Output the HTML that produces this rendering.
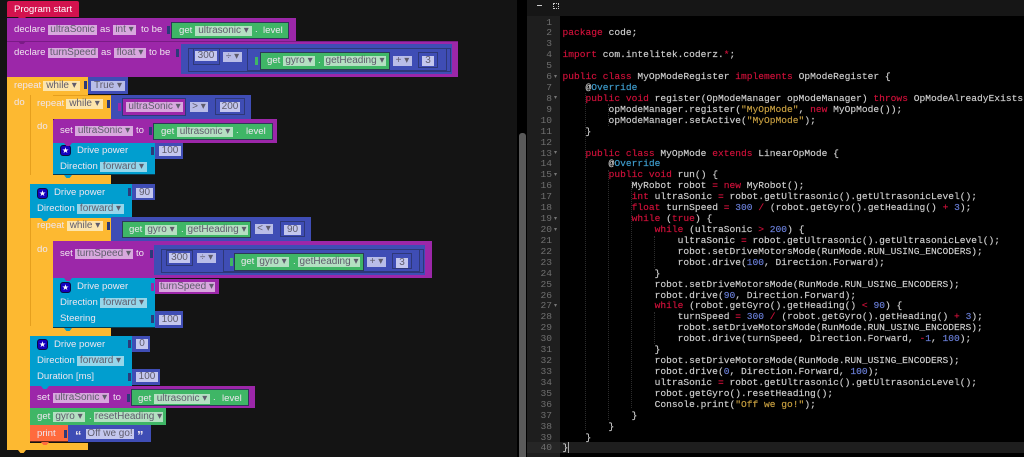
<!DOCTYPE html>
<html><head><meta charset="utf-8"><style>
html,body{margin:0;padding:0;background:#141414;width:1024px;height:457px;overflow:hidden}
#p{position:relative;width:1024px;height:457px;overflow:hidden;font-family:"Liberation Sans",sans-serif}
.b,.t,.f,.x{position:absolute;box-sizing:border-box;white-space:nowrap}
.t{color:#efe6ef;font-size:9.6px;line-height:12px;height:12px}
.f{font-size:10px;line-height:10px;text-align:center;color:#5f5c6c;background:#d8a8de;height:10px}
.g{background:#b4e0c2}.y{background:#fde5ac}.l{background:#b9bde8}.c{background:#96d6ea}.i{background:#c4c7ee}
.pu{background:#9c27a9}.gr{background:#3fb666;border:1px solid #2c3a55}.bl{background:#3f4db5}.ye{background:#fdb931}.cy{background:#019ecf}
.n{width:8px;height:3px;clip-path:polygon(0 0,100% 0,70% 100%,30% 100%)}
.tab{width:3px;height:8px;background:#2c3a7a}
.o{border:1px solid #2e3878;background:transparent}
.s{background:#1400c0;border:1px solid #0a0a40;border-radius:3px;width:11px;height:11px;color:#fff;font-size:8px;line-height:9px;text-align:center}
#code{position:absolute;left:562.5px;top:17.5px;font-family:"Liberation Mono",monospace;font-size:9.6px;line-height:10.92px;color:#cfcfcf;white-space:pre;margin:0;-webkit-text-stroke:.15px}
#nums{position:absolute;left:527px;width:25px;top:17.5px;text-align:right;font-family:"Liberation Mono",monospace;font-size:9.6px;line-height:10.92px;color:#6f6f6f;white-space:pre;margin:0}
#code b{font-weight:normal;color:#d0103a}#code i{font-style:normal;color:#c9a040}#code u{text-decoration:none;color:#6a7fd8}#code em{font-style:normal;color:#3f9fd0}
.ig{position:absolute;width:0;border-left:1px dotted #2c2c2c}
</style></head><body><div id="p">

<!-- yellow repeat -->
<div class="b ye" style="left:7px;top:77px;width:23px;height:373px"></div>
<div class="b ye" style="left:7px;top:77px;width:81px;height:20px"></div>
<div class="b ye" style="left:7px;top:443px;width:81px;height:7px"></div>
<div class="b ye" style="left:18px;top:450px;width:8px;height:3px;clip-path:polygon(0 0,100% 0,70% 100%,30% 100%)"></div>
<div class="b ye" style="left:30px;top:95px;width:81px;height:24px;border-left:1px solid #e59f1e;border-top:1px solid #e59f1e"></div>
<div class="b ye" style="left:30px;top:95px;width:23px;height:88px;border-left:1px solid #e59f1e"></div>
<div class="b ye" style="left:30px;top:175px;width:81px;height:9px"></div>
<div class="b ye" style="left:30px;top:217px;width:81px;height:24px"></div>
<div class="b ye" style="left:30px;top:217px;width:23px;height:119px;border-left:1px solid #e59f1e"></div>
<div class="b ye" style="left:30px;top:326px;width:81px;height:10px"></div>

<!-- program start -->
<div class="b" style="left:7px;top:1px;width:72px;height:16px;background:#d3124e;border-radius:2px 2px 0 0"></div>
<div class="b n" style="left:18px;top:17px;background:#d3124e"></div>
<div class="t" style="left:14px;top:4px;color:#fff">Program start</div>

<!-- declare 1 -->
<div class="b pu" style="left:7px;top:18px;width:289px;height:23px"></div>
<div class="t" style="left:14px;top:24px">declare</div>
<div class="f" style="left:48px;top:25px;width:49px">ultraSonic</div>
<div class="t" style="left:100px;top:24px">as</div>
<div class="f" style="left:113px;top:25px;width:23px">int ▾</div>
<div class="t" style="left:141px;top:24px">to be</div>
<div class="b tab" style="left:167px;top:26px"></div>
<div class="b gr" style="left:171px;top:22px;width:118px;height:17px"></div>
<div class="t" style="left:179px;top:25px">get</div>
<div class="f g" style="left:195px;top:26px;width:57px">ultrasonic ▾</div>
<div class="t" style="left:255px;top:24px">.</div>
<div class="t" style="left:263px;top:25px">level</div>

<!-- declare 2 -->
<div class="b pu" style="left:7px;top:41px;width:451px;height:36px;border-top:1px solid #7a1b86"></div>
<div class="b n" style="left:18px;top:41px;background:#7a1b86"></div>
<div class="t" style="left:14px;top:47px">declare</div>
<div class="f" style="left:48px;top:48px;width:50px">turnSpeed</div>
<div class="t" style="left:101px;top:47px">as</div>
<div class="f" style="left:114px;top:48px;width:32px">float ▾</div>
<div class="t" style="left:149px;top:47px">to be</div>
<div class="b tab" style="left:176px;top:49px"></div>
<div class="b bl" style="left:181px;top:44px;width:271px;height:30px"></div>
<div class="b o" style="left:188px;top:48px;width:263px;height:24px"></div>
<div class="b o" style="left:193px;top:48px;width:27px;height:17px"></div>
<div class="f i" style="left:195px;top:51px;width:22px">300</div>
<div class="f l" style="left:223px;top:52px;width:19px">÷ ▾</div>
<div class="b o" style="left:247px;top:48px;width:200px;height:23px"></div>
<div class="b tab" style="left:255px;top:57px;background:#3fb666"></div>
<div class="b gr" style="left:260px;top:52px;width:130px;height:18px"></div>
<div class="t" style="left:267px;top:55px">get</div>
<div class="f g" style="left:283px;top:56px;width:32px">gyro ▾</div>
<div class="t" style="left:318px;top:55px">.</div>
<div class="f g" style="left:324px;top:56px;width:62px">getHeading ▾</div>
<div class="f l" style="left:393px;top:56px;width:19px">+ ▾</div>
<div class="b o" style="left:418px;top:52px;width:20px;height:16px"></div>
<div class="f i" style="left:422px;top:56px;width:12px">3</div>

<!-- repeat true -->
<div class="t" style="left:14px;top:80px">repeat</div>
<div class="f y" style="left:43px;top:81px;width:37px">while ▾</div>
<div class="b tab" style="left:84px;top:81px"></div>
<div class="b bl" style="left:88px;top:77px;width:40px;height:17px"></div>
<div class="f l" style="left:91px;top:81px;width:34px">True ▾</div>
<div class="t" style="left:14px;top:97px">do</div>

<!-- repeat 1 -->
<div class="t" style="left:37px;top:98px">repeat</div>
<div class="f y" style="left:66px;top:99px;width:37px">while ▾</div>
<div class="b tab" style="left:107px;top:100px"></div>
<div class="b bl" style="left:111px;top:95px;width:140px;height:25px"></div>
<div class="b tab" style="left:118px;top:103px;background:#9c27a9"></div>
<div class="b pu" style="left:122px;top:98px;width:64px;height:18px;border:1px solid #2c3a7a"></div>
<div class="f" style="left:126px;top:102px;width:57px">ultraSonic ▾</div>
<div class="f l" style="left:190px;top:102px;width:18px">&gt; ▾</div>
<div class="b o" style="left:215px;top:98px;width:30px;height:17px"></div>
<div class="f i" style="left:220px;top:102px;width:20px">200</div>

<div class="t" style="left:37px;top:121px">do</div>
<div class="b pu" style="left:53px;top:119px;width:224px;height:24px;border-radius:2px 0 0 0"></div>
<div class="t" style="left:60px;top:125px">set</div>
<div class="f" style="left:75px;top:126px;width:58px">ultraSonic ▾</div>
<div class="t" style="left:136px;top:125px">to</div>
<div class="b tab" style="left:149px;top:127px"></div>
<div class="b gr" style="left:153px;top:123px;width:120px;height:17px"></div>
<div class="t" style="left:161px;top:126px">get</div>
<div class="f g" style="left:177px;top:127px;width:56px">ultrasonic ▾</div>
<div class="t" style="left:236px;top:125px">.</div>
<div class="t" style="left:246px;top:126px">level</div>
<div class="b n" style="left:64px;top:143px;background:#9c27a9;z-index:2"></div>

<div class="b cy" style="left:53px;top:143px;width:102px;height:32px;border-bottom:1px solid #0a3a50"></div>
<div class="b n" style="left:64px;top:175px;background:#019ecf"></div>
<div class="b s" style="left:60px;top:145px">★</div>
<div class="t" style="left:77px;top:145px">Drive power</div>
<div class="t" style="left:60px;top:161px">Direction</div>
<div class="f c" style="left:100px;top:162px;width:47px">forward ▾</div>
<div class="b tab" style="left:151px;top:147px"></div>
<div class="b bl" style="left:155px;top:143px;width:28px;height:16px"></div>
<div class="f i" style="left:159px;top:146px;width:22px">100</div>

<!-- drive 90 -->
<div class="b cy" style="left:30px;top:184px;width:102px;height:34px"></div>
<div class="b n" style="left:41px;top:218px;background:#019ecf;z-index:2"></div>
<div class="b s" style="left:37px;top:188px">★</div>
<div class="t" style="left:54px;top:187px">Drive power</div>
<div class="t" style="left:37px;top:203px">Direction</div>
<div class="f c" style="left:77px;top:204px;width:47px">forward ▾</div>
<div class="b tab" style="left:128px;top:188px"></div>
<div class="b bl" style="left:132px;top:184px;width:23px;height:16px"></div>
<div class="f i" style="left:136px;top:188px;width:17px">90</div>

<!-- repeat 2 -->
<div class="t" style="left:37px;top:220px">repeat</div>
<div class="f y" style="left:67px;top:221px;width:36px">while ▾</div>
<div class="b tab" style="left:107px;top:222px"></div>
<div class="b bl" style="left:111px;top:217px;width:200px;height:24px"></div>
<div class="b gr" style="left:122px;top:221px;width:129px;height:17px"></div>
<div class="t" style="left:129px;top:224px">get</div>
<div class="f g" style="left:145px;top:225px;width:32px">gyro ▾</div>
<div class="t" style="left:181px;top:224px">.</div>
<div class="f g" style="left:186px;top:225px;width:62px">getHeading ▾</div>
<div class="f l" style="left:255px;top:224px;width:18px">&lt; ▾</div>
<div class="b o" style="left:280px;top:221px;width:25px;height:16px"></div>
<div class="f i" style="left:284px;top:225px;width:17px">90</div>

<div class="t" style="left:37px;top:244px">do</div>
<div class="b pu" style="left:53px;top:241px;width:379px;height:37px"></div>
<div class="t" style="left:60px;top:248px">set</div>
<div class="f" style="left:75px;top:249px;width:58px">turnSpeed ▾</div>
<div class="t" style="left:136px;top:248px">to</div>
<div class="b tab" style="left:150px;top:250px"></div>
<div class="b bl" style="left:154px;top:245px;width:271px;height:30px"></div>
<div class="b o" style="left:161px;top:249px;width:263px;height:24px"></div>
<div class="b o" style="left:166px;top:250px;width:27px;height:16px"></div>
<div class="f i" style="left:169px;top:253px;width:21px">300</div>
<div class="f l" style="left:197px;top:253px;width:19px">÷ ▾</div>
<div class="b o" style="left:223px;top:249px;width:197px;height:23px"></div>
<div class="b tab" style="left:230px;top:258px;background:#3fb666"></div>
<div class="b gr" style="left:234px;top:253px;width:130px;height:18px"></div>
<div class="t" style="left:241px;top:256px">get</div>
<div class="f g" style="left:257px;top:257px;width:32px">gyro ▾</div>
<div class="t" style="left:293px;top:256px">.</div>
<div class="f g" style="left:298px;top:257px;width:62px">getHeading ▾</div>
<div class="f l" style="left:367px;top:257px;width:19px">+ ▾</div>
<div class="b o" style="left:392px;top:253px;width:20px;height:16px"></div>
<div class="f i" style="left:396px;top:258px;width:12px">3</div>
<div class="b n" style="left:64px;top:278px;background:#9c27a9;z-index:2"></div>

<div class="b cy" style="left:53px;top:278px;width:102px;height:50px;border-bottom:1px solid #0a3a50"></div>
<div class="b n" style="left:64px;top:328px;background:#019ecf"></div>
<div class="b s" style="left:60px;top:282px">★</div>
<div class="t" style="left:77px;top:281px">Drive power</div>
<div class="t" style="left:60px;top:297px">Direction</div>
<div class="f c" style="left:100px;top:298px;width:47px">forward ▾</div>
<div class="t" style="left:60px;top:313px">Steering</div>
<div class="b tab" style="left:151px;top:283px;background:#9c27a9"></div>
<div class="b pu" style="left:155px;top:279px;width:64px;height:15px"></div>
<div class="f" style="left:159px;top:282px;width:56px">turnSpeed ▾</div>
<div class="b tab" style="left:151px;top:315px"></div>
<div class="b bl" style="left:155px;top:311px;width:28px;height:17px"></div>
<div class="f i" style="left:159px;top:315px;width:22px">100</div>

<!-- drive 0 -->
<div class="b cy" style="left:30px;top:336px;width:102px;height:50px"></div>
<div class="b n" style="left:41px;top:386px;background:#019ecf;z-index:2"></div>
<div class="b s" style="left:37px;top:339px">★</div>
<div class="t" style="left:54px;top:339px">Drive power</div>
<div class="t" style="left:37px;top:355px">Direction</div>
<div class="f c" style="left:77px;top:356px;width:47px">forward ▾</div>
<div class="t" style="left:37px;top:371px">Duration [ms]</div>
<div class="b tab" style="left:128px;top:340px"></div>
<div class="b bl" style="left:132px;top:336px;width:18px;height:16px"></div>
<div class="f i" style="left:136px;top:339px;width:12px">0</div>
<div class="b tab" style="left:128px;top:373px"></div>
<div class="b bl" style="left:132px;top:369px;width:28px;height:16px"></div>
<div class="f i" style="left:136px;top:372px;width:22px">100</div>

<!-- set -->
<div class="b pu" style="left:30px;top:386px;width:225px;height:22px"></div>
<div class="t" style="left:37px;top:392px">set</div>
<div class="f" style="left:53px;top:393px;width:56px">ultraSonic ▾</div>
<div class="t" style="left:113px;top:392px">to</div>
<div class="b tab" style="left:127px;top:394px"></div>
<div class="b gr" style="left:131px;top:389px;width:118px;height:17px"></div>
<div class="t" style="left:138px;top:393px">get</div>
<div class="f g" style="left:154px;top:394px;width:56px">ultrasonic ▾</div>
<div class="t" style="left:213px;top:392px">.</div>
<div class="t" style="left:222px;top:393px">level</div>

<!-- get -->
<div class="b" style="left:30px;top:408px;width:136px;height:17px;background:#3fb666"></div>
<div class="t" style="left:37px;top:411px">get</div>
<div class="f g" style="left:53px;top:412px;width:32px">gyro ▾</div>
<div class="t" style="left:89px;top:411px">.</div>
<div class="f g" style="left:94px;top:412px;width:69px">resetHeading ▾</div>

<!-- print -->
<div class="b" style="left:30px;top:425px;width:38px;height:17px;background:#ff6a3d;border-bottom:1px solid #6b2a18"></div>
<div class="b n" style="left:41px;top:442px;background:#ff6a3d"></div>
<div class="t" style="left:37px;top:428px">print</div>
<div class="b tab" style="left:64px;top:430px"></div>
<div class="b bl" style="left:68px;top:425px;width:83px;height:17px"></div>
<div class="t" style="left:75px;top:429px;font-weight:bold;font-size:13px;line-height:13px;height:13px">“</div>
<div class="f i" style="left:86px;top:429px;width:48px">Off we go!</div>
<div class="t" style="left:137px;top:429px;font-weight:bold;font-size:13px;line-height:13px;height:13px">”</div>

<!-- divider -->
<div class="b" style="left:517px;top:0;width:10px;height:457px;background:#000"></div>
<div class="b" style="left:519px;top:133px;width:7px;height:324px;background:#5a5a5a;border-radius:3px 3px 0 0"></div>

<!-- editor -->
<div class="b" style="left:527px;top:0;width:33px;height:457px;background:#1e1e1e"></div>
<div class="b" style="left:560px;top:0;width:464px;height:457px;background:#000"></div>
<div class="b" style="left:527px;top:0;width:497px;height:16px;background:#161616"></div>
<div class="b" style="left:537px;top:5px;width:5px;height:1px;background:#ccc"></div>
<div class="b" style="left:553px;top:3px;width:6px;height:6px;border:1px dotted #ccc"></div>
<div class="b" style="left:560px;top:442px;width:464px;height:11px;background:#1e1e1e"></div>
<div class="b" style="left:527px;top:442px;width:33px;height:11px;background:#262626"></div>
<div class="b" style="left:568px;top:442px;width:1px;height:11px;background:#aaa"></div>
<div class="ig" style="left:585px;top:93px;height:337px"></div>
<div class="ig" style="left:608px;top:104px;height:22px"></div>
<div class="ig" style="left:608px;top:170px;height:250px"></div>
<div class="ig" style="left:631px;top:181px;height:227px"></div>
<div class="ig" style="left:654px;top:236px;height:32px"></div>
<div class="ig" style="left:654px;top:312px;height:32px"></div>
<pre id="nums">1
2
3
4
5
6
7
8
9
10
11
12
13
14
15
16
17
18
19
20
21
22
23
24
25
26
27
28
29
30
31
32
33
34
35
36
37
38
39
40</pre>
<div class="t" style="left:554px;top:71px;color:#777;font-size:6px">▾</div>
<div class="t" style="left:554px;top:92px;color:#777;font-size:6px">▾</div>
<div class="t" style="left:554px;top:147px;color:#777;font-size:6px">▾</div>
<div class="t" style="left:554px;top:169px;color:#777;font-size:6px">▾</div>
<div class="t" style="left:554px;top:213px;color:#777;font-size:6px">▾</div>
<div class="t" style="left:554px;top:224px;color:#777;font-size:6px">▾</div>
<div class="t" style="left:554px;top:300px;color:#777;font-size:6px">▾</div>
<pre id="code">

<b>package</b> code;

<b>import</b> com.intelitek.coderz.<b>*</b>;

<b>public class</b> MyOpModeRegister <b>implements</b> OpModeRegister {
    @<em>Override</em>
    <b>public void</b> register(OpModeManager opModeManager) <b>throws</b> OpModeAlreadyExists
        opModeManager.register(<i>"MyOpMode"</i>, <b>new</b> MyOpMode());
        opModeManager.setActive(<i>"MyOpMode"</i>);
    }

    <b>public class</b> MyOpMode <b>extends</b> LinearOpMode {
        @<em>Override</em>
        <b>public void</b> run() {
            MyRobot robot <b>=</b> <b>new</b> MyRobot();
            <b>int</b> ultraSonic <b>=</b> robot.getUltrasonic().getUltrasonicLevel();
            <b>float</b> turnSpeed <b>=</b> <u>300</u> <b>/</b> (robot.getGyro().getHeading() <b>+</b> <u>3</u>);
            <b>while</b> (<b>true</b>) {
                <b>while</b> (ultraSonic <b>&gt;</b> <u>200</u>) {
                    ultraSonic <b>=</b> robot.getUltrasonic().getUltrasonicLevel();
                    robot.setDriveMotorsMode(RunMode.RUN_USING_ENCODERS);
                    robot.drive(<u>100</u>, Direction.Forward);
                }
                robot.setDriveMotorsMode(RunMode.RUN_USING_ENCODERS);
                robot.drive(<u>90</u>, Direction.Forward);
                <b>while</b> (robot.getGyro().getHeading() <b>&lt;</b> <u>90</u>) {
                    turnSpeed <b>=</b> <u>300</u> <b>/</b> (robot.getGyro().getHeading() <b>+</b> <u>3</u>);
                    robot.setDriveMotorsMode(RunMode.RUN_USING_ENCODERS);
                    robot.drive(turnSpeed, Direction.Forward, <b>-</b><u>1</u>, <u>100</u>);
                }
                robot.setDriveMotorsMode(RunMode.RUN_USING_ENCODERS);
                robot.drive(<u>0</u>, Direction.Forward, <u>100</u>);
                ultraSonic <b>=</b> robot.getUltrasonic().getUltrasonicLevel();
                robot.getGyro().resetHeading();
                Console.print(<i>"Off we go!"</i>);
            }
        }
    }
}</pre>
</div></body></html>
